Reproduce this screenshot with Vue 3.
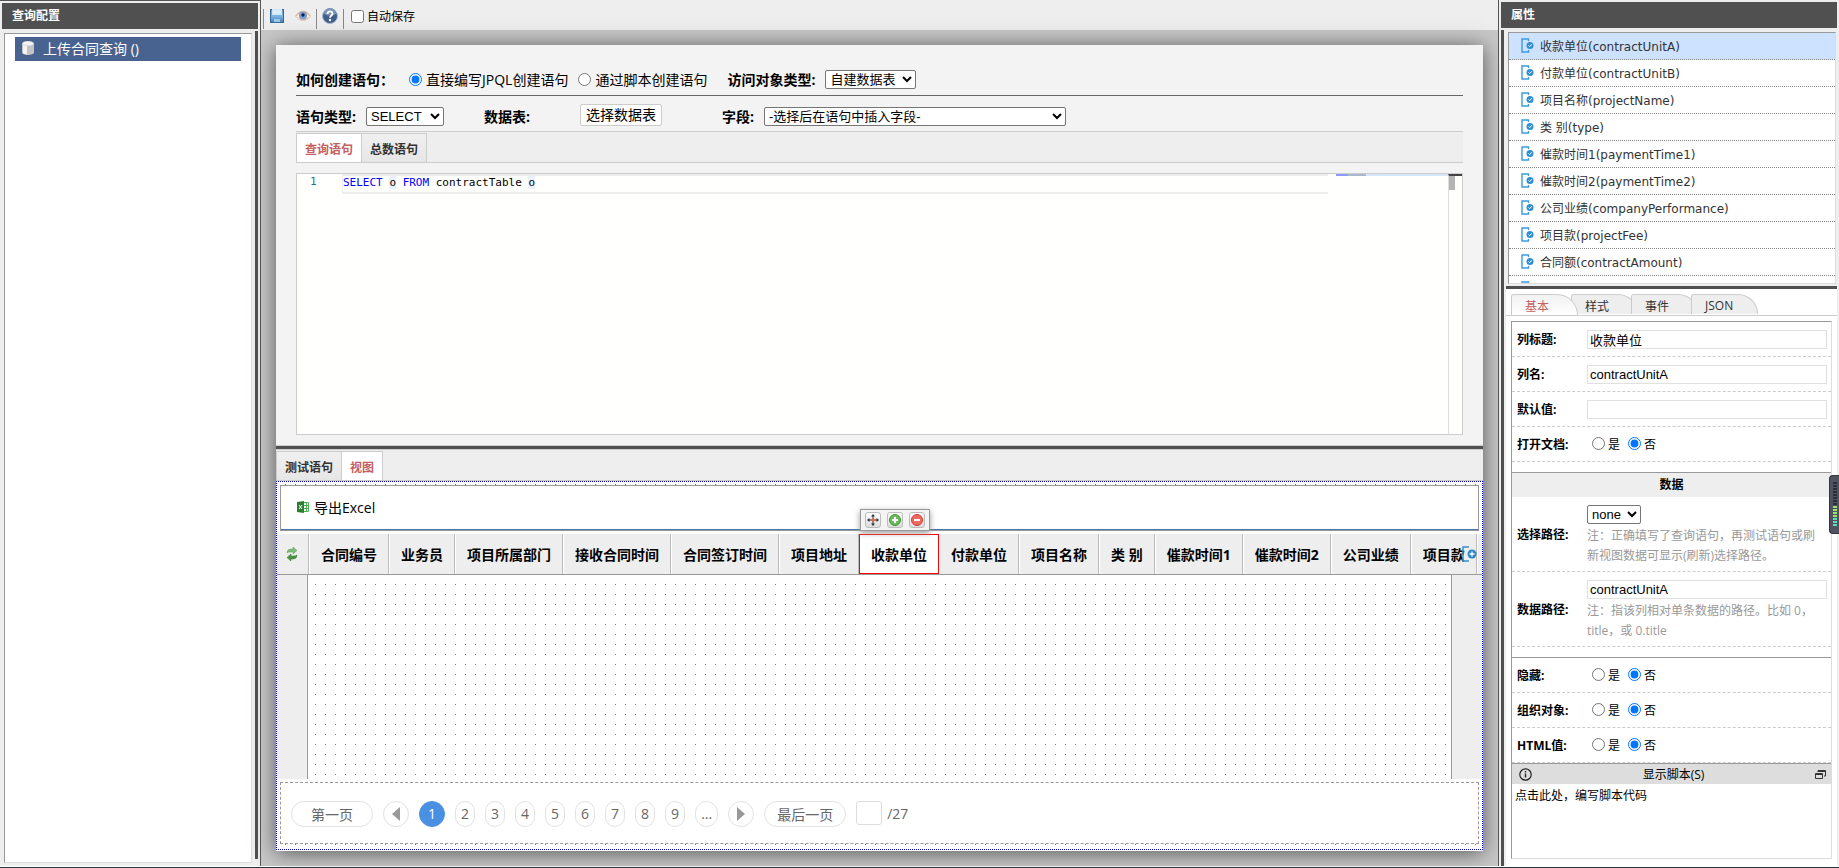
<style>
body {
  margin: 0;
  overflow: hidden;
}
</style>

<style scoped>
.app {
  box-sizing: border-box;
  height: 100vh;
  display: grid;
  grid-template-columns: 261px minmax(0, 1fr) 341px;
  grid-template-rows: minmax(0, 1fr);
  padding-bottom: 1px;
  border-bottom: 1px solid #2b3540;
  background: #fff;
  color: #000;
  font-family: "Open Sans", "Noto Sans CJK SC", sans-serif;
  font-size: 12px;
}

.app * {
  box-sizing: border-box;
}

svg {
  display: block;
  flex: none;
}

button,
input,
select,
textarea {
  font-family: "Liberation Sans", "Noto Sans CJK SC", sans-serif;
  font-size: 13px;
  margin: 0;
  color: #000;
}

select {
  height: 19px;
  padding: 0;
  border: 1px solid #767676;
  border-radius: 2px;
  background: #fff;
}

.title {
  flex: none;
  height: 26px;
  margin: 0;
  padding: 0 10px;
  background: #505050;
  color: #fff;
  font-size: 12px;
  font-weight: bold;
  line-height: 26px;
}

/* left panel */
.left {
  display: flex;
  flex-direction: column;
  padding: 2px 2px 3px 2px;
  background: #eee;
  border-top: 1px solid #555;
  border-right: 1px solid #555;
}

.left_body {
  flex: 1;
  display: flex;
  justify-content: space-between;
  padding: 2px 0 0 2px;
}

.tree {
  width: 248px;
  margin-top: 2px;
  padding: 3px 10px;
  background: #fff;
  border: 1px solid #ddd;
  border-top-color: #999;
  border-left-color: #999;
}

.tree_item {
  display: flex;
  align-items: center;
  gap: 9px;
  height: 24px;
  padding: 0 0 2px 7px;
  background: #48638f;
  color: #fff;
  font-size: 14px;
}

.splitter {
  width: 3px;
  margin-bottom: 4px;
  background: #505050;
}

/* toolbar */
.center {
  display: flex;
  flex-direction: column;
  min-width: 0;
  background: #c8c8c8;
}

.toolbar {
  flex: none;
  display: flex;
  align-items: center;
  height: 30px;
  padding: 2px 0 0 2px;
  background: #eee;
}

.toolbar button {
  display: flex;
  align-items: center;
  justify-content: center;
  width: 26px;
  height: 20px;
  padding: 0;
  border: 0;
  background: none;
}

.toolbar .sep {
  width: 1px;
  height: 20px;
  margin-top: 5px;
  background: #888;
}

.toolbar .sep + label {
  display: flex;
  align-items: center;
  gap: 3px;
  padding-left: 7px;
}

/* sheet */
.sheet {
  flex: 1;
  min-height: 0;
  display: flex;
  flex-direction: column;
  margin: 15px;
  background: #fff;
  box-shadow: 0 2px 20px #555;
}

.query {
  flex: none;
  height: 400px;
  display: flex;
  flex-direction: column;
  padding: 20px 20px 10px 20px;
  background: #f3f3f3;
}

.line {
  flex: none;
  display: flex;
  align-items: center;
  font-size: 14px;
}

.line_mode {
  height: 31px;
  padding-bottom: 2px;
  border-bottom: 1px solid #666;
}

.line_type {
  height: 35px;
  padding-top: 5px;
}

.name {
  font-weight: bold;
}

.line_mode .how {
  width: 113px;
}

.line_mode .object {
  width: 98px;
  margin-left: 10px;
}

.line_mode .pick {
  display: flex;
  align-items: center;
  gap: 4px;
  margin-right: 10px;
}

.line_type .n1 {
  width: 70px;
}

.line_type .n2 {
  width: 96px;
  margin-left: 40px;
}

.line_type .n3 {
  width: 42px;
  margin-left: 60px;
}

.s_object {
  width: 91px;
}

.s_type {
  width: 78px;
}

.s_field {
  width: 302px;
}

.choose {
  width: 82px;
  height: 22px;
  margin-bottom: 2px;
  padding: 0;
  background: #fff;
  border: 1px solid #ccc;
  border-radius: 2px;
  font-size: 14px;
  line-height: 18px;
}

.tabs {
  flex: none;
  display: flex;
  height: 32px;
  padding-top: 1px;
  background: #eee;
  border-top: 1px solid #ccc;
  border-bottom: 1px solid #ccc;
}

.tabs button {
  padding: 0 8px;
  border: 1px solid #ccc;
  border-bottom: 0;
  background: linear-gradient(#f0f0f0, #e6e6e6);
  color: #333;
  font-size: 12px;
  font-weight: bold;
}

.tabs button + button {
  margin-left: -1px;
}

.tabs button.on {
  background: #fff;
  color: #c46060;
}

.editor {
  flex: 1;
  display: flex;
  margin-top: 10px;
  background: #fffffe;
  border: 1px solid #ccc;
  font-family: "DejaVu Sans Mono", monospace;
  font-size: 11px;
  line-height: 16px;
}

.editor .num {
  width: 45px;
  padding-left: 13px;
  color: #237893;
}

.editor .code {
  flex: 1;
  height: 20px;
  border: 2px solid #eee;
  border-left-width: 1px;
  border-right: 0;
  line-height: 14px;
  white-space: pre;
}

.editor .kw {
  color: #00f;
}

.editor .hit {
  background: #eaf1fb;
}

.minimap {
  width: 120px;
  padding-left: 8px;
}

.minimap i {
  display: block;
  height: 2px;
  background: linear-gradient(90deg, #8c9bff 12px, #a9b8d0 12px 30px, #d6e8ff 30px);
}

.bar {
  width: 14px;
  border-left: 1px solid #ddd;
  border-top: 2px solid #444;
}

.bar i {
  display: block;
  width: 6px;
  height: 14px;
  background: #b4b4b4;
}

.hsplit {
  flex: none;
  height: 5px;
  border-top: 1px solid #ccc;
  border-bottom: 1px solid #ccc;
  background: #505050;
}

.tabs.lower {
  height: 31px;
  border-top: 0;
}

/* view */
.view {
  flex: 1;
  min-height: 0;
  display: flex;
  flex-direction: column;
  margin-bottom: 1px;
  padding-bottom: 5px;
  border: 1px dotted #00c;
}

.view,
.grid {
  background: #fff url("data:image/svg+xml,%3Csvg xmlns='http://www.w3.org/2000/svg' width='10' height='10'%3E%3Crect x='8' y='2' width='1' height='1' fill='%23777'/%3E%3C/svg%3E");
}

.export {
  flex: none;
  height: 46px;
  margin: 3px;
  padding: 0 0 3px 16px;
  display: flex;
  align-items: center;
  background: #fff;
  border: 1px solid #999;
  box-shadow: inset 0 -1px #4477aa;
}

.export button {
  display: flex;
  align-items: center;
  gap: 5px;
  padding: 0;
  border: 0;
  background: none;
  font-family: "Open Sans", "Noto Sans CJK SC", sans-serif;
  font-size: 14px;
}

.head {
  position: relative;
  flex: none;
  height: 41px;
  padding-right: 4px;
  background: #eee;
  border-bottom: 1px solid #999;
}

.head_clip {
  overflow: hidden;
  border-right: 1px solid #fff;
}

.head table {
  border-spacing: 0;
}

.head th {
  height: 40px;
  padding: 0 11px;
  border-left: 1px solid #fff;
  border-right: 1px solid #bbb;
  font-size: 14px;
  font-weight: bold;
  white-space: nowrap;
}

.head th.first {
  width: 32px;
  padding: 0 0 0 9px;
  border-left: 0;
}

.head th.on {
  background: #fff;
  border: 1px solid red;
}

.head .add {
  position: absolute;
  right: 5px;
  top: 12px;
}

.mini {
  position: absolute;
  left: 583px;
  top: -25px;
  display: flex;
  gap: 6px;
  height: 22px;
  padding: 2px 4px;
  background: #f4f4f4;
  border: 1px solid #999;
  box-shadow: 0 2px 6px #999;
}

.mini button {
  width: 16px;
  height: 16px;
  padding: 1px;
  background: linear-gradient(#fff, #ddd);
  border: 1px solid #bbb;
  border-radius: 3px;
}

.canvas {
  flex: 1;
  min-height: 0;
  display: flex;
}

.canvas .side {
  width: 31px;
  background: #eee;
  border-right: 1px solid #999;
}

.canvas .side.end {
  border-right: 0;
  border-left: 1px solid #999;
}

.canvas .grid {
  flex: 1;
  background-position: 9px 7px;
}

.pager {
  flex: none;
  display: flex;
  align-items: center;
  gap: 10px;
  height: 62px;
  margin: 3px 3px 0;
  padding: 2px 10px 0;
  background: #fff;
  border: 1px dashed #999;
  color: #666;
  font-size: 14px;
}

.pager button {
  display: flex;
  align-items: center;
  justify-content: center;
  min-width: 20px;
  height: 26px;
  padding: 0 5px 1px;
  background: #fff;
  border: 1px solid #e2e2e2;
  border-radius: 13px;
  color: #666;
  font-family: "Open Sans", "Noto Sans CJK SC", sans-serif;
  font-size: 14px;
}

.pager button.round {
  width: 26px;
}

.pager button.wide {
  width: 82px;
}

.pager button.on {
  width: 26px;
  background: #4a90e2;
  border-color: #4a90e2;
  color: #fff;
}

.pager label {
  display: flex;
  align-items: center;
  gap: 5px;
  padding-bottom: 2px;
}

.pager input {
  width: 26px;
  height: 24px;
  border: 1px solid #ddd;
  border-radius: 3px;
}

/* right panel */
.right {
  display: flex;
  flex-direction: column;
  padding: 2px 2px 0 2px;
  background: #eee;
  border-left: 1px solid #555;
}

.right_body {
  flex: 1;
  min-height: 0;
  display: flex;
  gap: 2px;
  padding-top: 2px;
}

.right_body .splitter {
  margin: 0;
}

.right_main {
  flex: 1;
  min-width: 0;
  display: flex;
  flex-direction: column;
}

.fields {
  flex: none;
  height: 252px;
  margin: 2px 1px 2px 2px;
  padding: 0;
  overflow: hidden;
  list-style: none;
  background: #fff;
  border: 1px solid #ddd;
  border-top-color: #999;
  border-left-color: #999;
  color: #333;
  font-family: "DejaVu Sans", "Noto Sans CJK SC", sans-serif;
}

.fields li {
  display: flex;
  align-items: center;
  gap: 6px;
  height: 27px;
  padding: 0 0 2px 12px;
  border-bottom: 1px dotted #888;
}

.fields li.on {
  background: #cce2ff;
}

.props {
  flex: 1;
  min-height: 0;
  display: flex;
  flex-direction: column;
  background: #fff;
  border-top: 3px solid #505050;
}

.ptabs {
  flex: none;
  display: flex;
  height: 27px;
  padding: 5px 0 0 5px;
  border-bottom: 1px solid #ccc;
}

.ptabs button {
  width: 67px;
  height: 20px;
  margin-right: -7px;
  padding: 2px 13px 0;
  text-align: left;
  background: #eee;
  border: 1px solid #ccc;
  border-bottom: 0;
  border-radius: 3px 24px 0 0;
  color: #333;
  font-size: 12px;
  font-family: "Open Sans", "Noto Sans CJK SC", sans-serif;
}

.ptabs button.on {
  position: relative;
  height: 21px;
  background: linear-gradient(#f2f2f2, #fff);
  color: #c46060;
}

.form {
  flex: 1;
  min-height: 0;
  display: flex;
  flex-direction: column;
  margin: 5px 5px 7px;
  border: 1px solid #ddd;
  border-top-color: #999;
  border-left-color: #999;
}

.prow {
  flex: none;
  display: grid;
  grid-template-columns: 70px minmax(0, 1fr);
  align-items: center;
  min-height: 35px;
  padding: 0 4px 0 5px;
  border-bottom: 1px dashed #ccc;
}

.prow .lbl {
  font-weight: bold;
}

.prow input[type="text"] {
  display: block;
  width: 100%;
  height: 19px;
  padding: 0 2px;
  border: 1px solid #e0e0e0;
}

.prow.tall {
  padding-top: 8px;
  padding-bottom: 5px;
}

.prow.tall .lbl {
  padding-bottom: 3px;
}

.prow.tall select {
  display: block;
  width: 54px;
}

.prow p {
  margin: 2px 0 0;
  padding-right: 8px;
  color: #999;
  line-height: 20px;
}

.radios {
  display: flex;
  gap: 8px;
  padding: 0 0 1px 5px;
}

.radios label {
  display: flex;
  align-items: center;
  gap: 3px;
}

.gap {
  flex: none;
  height: 11px;
  border-bottom: 1px solid #999;
}

.sect {
  flex: none;
  height: 24px;
  margin: 0;
  background: #eee;
  font-size: 12px;
  line-height: 24px;
  text-align: center;
}

.script_head {
  flex: none;
  display: flex;
  align-items: center;
  justify-content: space-between;
  height: 21px;
  padding: 0 5px 0 7px;
  background: #ddd;
  border-top: 1px solid #999;
}

.form textarea {
  flex: 1;
  padding: 2px 3px;
  border: 0;
  resize: none;
  font-size: 12px;
  line-height: 20px;
}

.meter {
  position: fixed;
  right: 0;
  top: 475px;
  width: 10px;
  height: 59px;
  padding: 6px 2px 6px 3px;
  background: #50525f;
  border: 1px solid #33353f;
  border-right: 0;
  border-radius: 4px 0 0 4px;
}

.meter i {
  display: block;
  height: 2px;
  margin-bottom: 1px;
  background: #2c2e38;
}

.meter i.low {
  background: #9be070;
}

.meter i.lowest {
  background: #5fdcb4;
}
</style>

<template>
  <div class="app">
    <aside class="left">
      <h2 class="title">查询配置</h2>
      <div class="left_body">
        <div class="tree">
          <div class="tree_item">
            <svg width="12" height="14" viewBox="0 0 12 14">
              <path d="M0 2.500v9C0 13 3 14 6 14s6-1 6-2.500v-9z" fill="#c4c4c4"/>
              <path d="M1 3v9c1 1 2 1.300 4 1.600V4z" fill="#f4f4f4"/>
              <ellipse cx="6" cy="2.500" rx="5.500" ry="2" fill="#f4f4f4" stroke="#ddd"/>
            </svg>
            <span>上传合同查询 ()</span>
          </div>
        </div>
        <div class="splitter"></div>
      </div>
    </aside>

    <main class="center">
      <div class="toolbar">
        <span class="sep"></span>
        <button type="button" aria-label="保存">
          <svg width="14" height="14" viewBox="0 0 14 14">
            <defs>
              <linearGradient id="disk" x1="0" y1="0" x2="0" y2="1">
                <stop offset="0" stop-color="#5d9bcb"/>
                <stop offset="0.500" stop-color="#7db6e0"/>
                <stop offset="1" stop-color="#3f7fb8"/>
              </linearGradient>
            </defs>
            <rect x="0.500" y="0.500" width="13" height="13" fill="url(#disk)" stroke="#356a9c"/>
            <rect x="2" y="0" width="10" height="6" fill="#cfe4f4"/>
            <path d="M3 2h8M3 4h8" stroke="#e9f4fb"/>
            <rect x="4" y="10" width="6" height="3" fill="#9cc8e8"/>
          </svg>
        </button>
        <button type="button" aria-label="预览">
          <svg width="16" height="12" viewBox="0 0 16 12">
            <path d="M0 6Q8-4.500 16 6 8 15.500 0 6z" fill="#e4b48e"/>
            <path d="M1 6.500Q8-1 15 6.500 8 12.500 1 6.500z" fill="#f7ece4"/>
            <circle cx="8" cy="5.500" r="4" fill="#7b9fd8"/>
            <circle cx="8" cy="5" r="1.700" fill="#17203c"/>
          </svg>
        </button>
        <span class="sep"></span>
        <button type="button" aria-label="帮助">
          <svg width="16" height="16" viewBox="0 0 16 16">
            <circle cx="8" cy="8" r="7.500" fill="#41608f" stroke="#aab4c4"/>
            <path d="M2 6a6 6 0 0 1 12 0Q8 9 2 6z" fill="#7b94b8"/>
            <path d="M5.500 6c0-3.500 5-3.300 5-.3C10.500 7.500 8 7.500 8 9.800" fill="none" stroke="#fff" stroke-width="1.800"/>
            <circle cx="8" cy="12" r="1.200" fill="#fff"/>
          </svg>
        </button>
        <span class="sep"></span>
        <label><input type="checkbox" v-model="data.autosave">自动保存</label>
      </div>

      <div class="sheet">
        <section class="query">
          <div class="line line_mode">
            <span class="name how">如何创建语句：</span>
            <label class="pick"><input type="radio" name="mode" value="jpql" v-model="data.mode">直接编写JPQL创建语句</label>
            <label class="pick"><input type="radio" name="mode" value="script" v-model="data.mode">通过脚本创建语句</label>
            <label class="name object" for="object">访问对象类型:</label>
            <select id="object" class="s_object">
              <option>自建数据表</option>
            </select>
          </div>
          <div class="line line_type">
            <label class="name n1" for="type">语句类型:</label>
            <select id="type" class="s_type">
              <option>SELECT</option>
            </select>
            <span class="name n2">数据表:</span>
            <button type="button" class="choose">选择数据表</button>
            <label class="name n3" for="field">字段:</label>
            <select id="field" class="s_field">
              <option>-选择后在语句中插入字段-</option>
            </select>
          </div>
          <div class="tabs">
            <button type="button" class="on">查询语句</button>
            <button type="button">总数语句</button>
          </div>
          <div class="editor">
            <div class="num">1</div>
            <div class="code"><span class="kw">SELECT</span> <span class="hit">o</span> <span class="kw">FROM</span> contractTable <span class="hit">o</span></div>
            <div class="minimap"><i></i></div>
            <div class="bar"><i></i></div>
          </div>
        </section>

        <div class="hsplit"></div>
        <div class="tabs lower">
          <button type="button">测试语句</button>
          <button type="button" class="on">视图</button>
        </div>

        <section class="view">
          <div class="export">
            <button type="button">
              <svg width="12" height="12" viewBox="0 0 12 12">
                <path d="M6 1.500h5.500v9H6z" fill="#fff" stroke="#4caf50"/>
                <path d="M7 4.500h5M7 7.500h5M9.500 1v10" stroke="#4caf50"/>
                <path d="M0 1l7-1v12l-7-1z" fill="#2e7d32"/>
                <path d="M2 4l3 4M5 4L2 8" stroke="#fff"/>
              </svg>
              导出Excel
            </button>
          </div>

          <div class="head">
            <div class="head_clip">
              <table>
                <thead>
                  <tr>
                    <th class="first">
                      <svg width="12" height="14" viewBox="0 0 12 14">
                        <path d="M1 6q0-4 4-4h2V0l4 3.500L7 7V5H4Q2 5 1 6z" fill="#7dbb78" stroke="#5f9e5a" stroke-width="0.500"/>
                        <path d="M11 8q0 4-4 4H5v2l-4-3.500L5 7v2h3q2 0 3-1z" fill="#4c9447" stroke="#35702f" stroke-width="0.500"/>
                      </svg>
                    </th>
                    <th v-for="c in columns" :key="c" :class="{ on: c === '收款单位' }">{{ c }}</th>
                  </tr>
                </thead>
              </table>
            </div>
            <svg class="add" width="15" height="16" viewBox="0 0 15 16">
              <path d="M7 1H1v14h6" fill="none" stroke="#3a8fd0" stroke-width="1.500"/>
              <circle cx="10" cy="8" r="4.500" fill="#2f87c8"/>
              <path d="M10 5.500v5M7.500 8h5" stroke="#fff" stroke-width="1.300"/>
            </svg>
            <div class="mini">
              <button type="button" aria-label="移动">
                <svg width="12" height="12" viewBox="0 0 12 12">
                  <path d="M6 0l2 2.500H4zM6 12l2-2.500H4zM0 6l2.500-2v4zM12 6L9.500 4v4z" fill="#333"/>
                  <path d="M6 2v8M2 6h8" stroke="#333"/>
                  <circle cx="6" cy="6" r="1.700" fill="#f0642c"/>
                </svg>
              </button>
              <button type="button" aria-label="添加">
                <svg width="12" height="12" viewBox="0 0 12 12">
                  <circle cx="6" cy="6" r="5.500" fill="#6cbb5a" stroke="#3f9238"/>
                  <path d="M6 3v6M3 6h6" stroke="#fff" stroke-width="2"/>
                </svg>
              </button>
              <button type="button" aria-label="删除">
                <svg width="12" height="12" viewBox="0 0 12 12">
                  <circle cx="6" cy="6" r="5.500" fill="#ee6a60" stroke="#d03c34"/>
                  <path d="M3 6h6" stroke="#fff" stroke-width="2"/>
                </svg>
              </button>
            </div>
          </div>

          <div class="canvas">
            <div class="side"></div>
            <div class="grid"></div>
            <div class="side end"></div>
          </div>

          <div class="pager">
            <button type="button" class="wide">第一页</button>
            <button type="button" class="round" aria-label="上一页">
              <svg width="8" height="14" viewBox="0 0 8 14"><path d="M8 0v14L0 7z" fill="#999"/></svg>
            </button>
            <button type="button" v-for="n in 9" :key="n" :class="{ on: n === data.page }" @click="data.page = n">{{ n }}</button>
            <button type="button">...</button>
            <button type="button" class="round" aria-label="下一页">
              <svg width="8" height="14" viewBox="0 0 8 14"><path d="M0 0v14l8-7z" fill="#999"/></svg>
            </button>
            <button type="button" class="wide">最后一页</button>
            <label><input type="text">/27</label>
          </div>
        </section>
      </div>
    </main>

    <aside class="right">
      <h2 class="title">属性</h2>
      <div class="right_body">
        <div class="splitter"></div>
        <div class="right_main">
          <ul class="fields">
            <li v-for="(f, i) in fields" :key="i" :class="{ on: i === 0 }">
              <svg width="13" height="15" viewBox="0 0 13 15">
                <path d="M7.500 3V1H1v13h6.500v-2" fill="none" stroke="#3c9ade" stroke-width="1.400"/>
                <circle cx="9" cy="7.500" r="3.500" fill="#2f8fd2"/>
                <path d="M7.500 7.500l1.200 1.200 2-2.400" fill="none" stroke="#fff"/>
              </svg>
              <span>{{ f }}</span>
            </li>
          </ul>

          <div class="props">
            <div class="ptabs">
              <button type="button" v-for="t in tabs" :key="t" :class="{ on: t === data.tab }" @click="data.tab = t">{{ t }}</button>
            </div>
            <div class="form">
              <div class="prow">
                <label class="lbl" for="p_title">列标题:</label>
                <input id="p_title" type="text" v-model="data.title">
              </div>
              <div class="prow">
                <label class="lbl" for="p_name">列名:</label>
                <input id="p_name" type="text" v-model="data.name">
              </div>
              <div class="prow">
                <label class="lbl" for="p_default">默认值:</label>
                <input id="p_default" type="text">
              </div>
              <div class="prow">
                <span class="lbl">打开文档:</span>
                <div class="radios">
                  <label><input type="radio" name="open">是</label>
                  <label><input type="radio" name="open" checked>否</label>
                </div>
              </div>
              <div class="gap"></div>
              <h3 class="sect">数据</h3>
              <div class="prow tall">
                <label class="lbl" for="p_select">选择路径:</label>
                <div>
                  <select id="p_select">
                    <option>none</option>
                  </select>
                  <p>注：正确填写了查询语句，再测试语句或刷新视图数据可显示(刷新)选择路径。</p>
                </div>
              </div>
              <div class="prow tall">
                <label class="lbl" for="p_path">数据路径:</label>
                <div>
                  <input id="p_path" type="text" v-model="data.path">
                  <p>注：指该列相对单条数据的路径。比如 0，title，或 0.title</p>
                </div>
              </div>
              <div class="gap"></div>
              <div class="prow" v-for="(s, i) in switches" :key="s">
                <span class="lbl">{{ s }}</span>
                <div class="radios">
                  <label><input type="radio" :name="'sw' + i">是</label>
                  <label><input type="radio" :name="'sw' + i" checked>否</label>
                </div>
              </div>
              <div class="script_head">
                <svg width="13" height="13" viewBox="0 0 13 13">
                  <circle cx="6.500" cy="6.500" r="5.700" fill="none" stroke="#222" stroke-width="1.200"/>
                  <path d="M6.500 5.500v4M6.500 3v1.500" stroke="#222" stroke-width="1.400"/>
                </svg>
                <label for="script">显示脚本(S)</label>
                <svg width="11" height="11" viewBox="0 0 11 11">
                  <path d="M.5 4.500h7v5h-7zM.5 5.500h7" fill="none" stroke="#333"/>
                  <path d="M3 3V1.500h7.500V7H9M3 2.500h7" fill="none" stroke="#333"/>
                </svg>
              </div>
              <textarea id="script" v-model="data.script"></textarea>
            </div>
          </div>
        </div>
      </div>
    </aside>

    <div class="meter">
      <i v-for="n in 15" :key="n" :class="{ low: n > 8, lowest: n > 12 }"></i>
    </div>
  </div>
</template>

<script setup>
import {reactive} from 'vue'

const data = reactive({
  autosave: false,
  mode: 'jpql',
  page: 1,
  tab: '基本',
  title: '收款单位',
  name: 'contractUnitA',
  path: 'contractUnitA',
  script: '点击此处，编写脚本代码'
})

const columns = ['合同编号', '业务员', '项目所属部门', '接收合同时间', '合同签订时间', '项目地址', '收款单位',
  '付款单位', '项目名称', '类 别', '催款时间1', '催款时间2', '公司业绩', '项目款']

// the last row is cut off by the list, only its icon shows
const fields = [
  '收款单位(contractUnitA)',
  '付款单位(contractUnitB)',
  '项目名称(projectName)',
  '类 别(type)',
  '催款时间1(paymentTime1)',
  '催款时间2(paymentTime2)',
  '公司业绩(companyPerformance)',
  '项目款(projectFee)',
  '合同额(contractAmount)',
  ''
]

const tabs = ['基本', '样式', '事件', 'JSON']
const switches = ['隐藏:', '组织对象:', 'HTML值:']
</script>
